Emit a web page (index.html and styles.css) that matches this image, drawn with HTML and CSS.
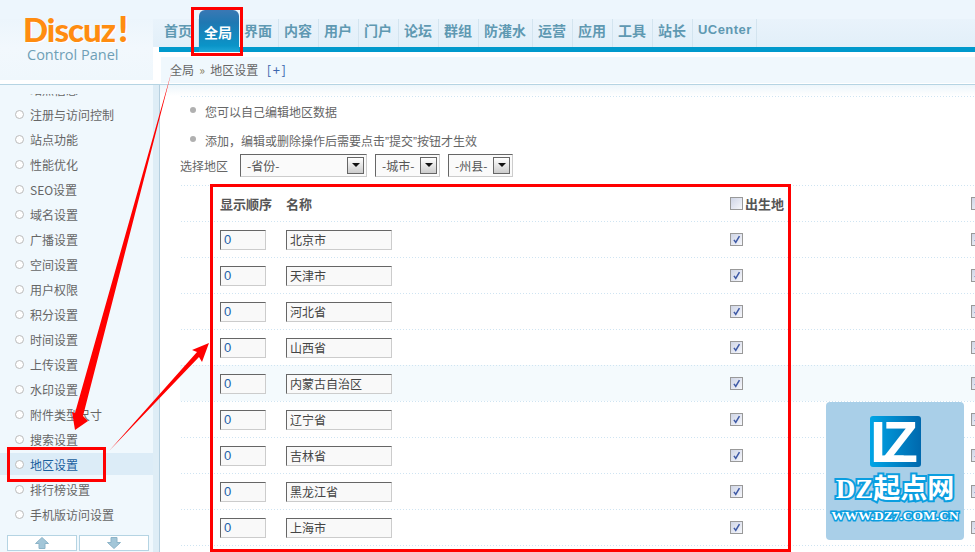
FILE: index.html
```html
<!DOCTYPE html>
<html lang="zh-CN">
<head>
<meta charset="utf-8">
<title>地区设置</title>
<link rel="stylesheet" href="styles.css">
</head>
<body>
<svg class="defs" width="0" height="0" aria-hidden="true">
  <symbol id="tick" viewBox="0 0 13 13"><path d="M3.5 7 L5.6 10 L10 2.5" fill="none" stroke="#3f5aa6" stroke-width="1.8"/></symbol>
</svg>
<div class="page">
  <header class="header">
    <div class="logo">
      <div class="logo-main">Discuz<span class="bang">!</span></div>
      <div class="logo-sub">Control Panel</div>
    </div>
    <div class="head-right">
      <nav class="nav">
        <a class="nav-item">首页</a>
        <a class="nav-item active">全局</a>
        <a class="nav-item">界面</a>
        <a class="nav-item">内容</a>
        <a class="nav-item">用户</a>
        <a class="nav-item">门户</a>
        <a class="nav-item">论坛</a>
        <a class="nav-item">群组</a>
        <a class="nav-item">防灌水</a>
        <a class="nav-item">运营</a>
        <a class="nav-item">应用</a>
        <a class="nav-item">工具</a>
        <a class="nav-item">站长</a>
        <a class="nav-item uc">UCenter</a>
      </nav>
      <div class="crumb-bar">全局 <span class="sep">»</span> 地区设置 <span class="plus">[+]</span></div>
    </div>
  </header>
  <div class="body">
    <aside class="side">
      <div class="side-col">
        <div class="menu">
          <ul class="menu-list">
            <li class="menu-item">站点信息</li>
            <li class="menu-item">注册与访问控制</li>
            <li class="menu-item">站点功能</li>
            <li class="menu-item">性能优化</li>
            <li class="menu-item">SEO设置</li>
            <li class="menu-item">域名设置</li>
            <li class="menu-item">广播设置</li>
            <li class="menu-item">空间设置</li>
            <li class="menu-item">用户权限</li>
            <li class="menu-item">积分设置</li>
            <li class="menu-item">时间设置</li>
            <li class="menu-item">上传设置</li>
            <li class="menu-item">水印设置</li>
            <li class="menu-item">附件类型尺寸</li>
            <li class="menu-item">搜索设置</li>
            <li class="menu-item current">地区设置</li>
            <li class="menu-item">排行榜设置</li>
            <li class="menu-item">手机版访问设置</li>
          </ul>
        </div>
        <div class="scroll-btns">
          <button class="scroll-btn"><svg width="14" height="12" viewBox="0 0 14 12"><path d="M7 0.5 L13.5 6.5 H10 V11.5 H4 V6.5 H0.5 Z" fill="#a3c6d8" stroke="#8db4c8"/></svg></button>
          <button class="scroll-btn"><svg width="14" height="12" viewBox="0 0 14 12"><path d="M7 11.5 L13.5 5.5 H10 V0.5 H4 V5.5 H0.5 Z" fill="#a3c6d8" stroke="#8db4c8"/></svg></button>
        </div>
      </div>
      <div class="side-strip"></div>
    </aside>
    <main class="main">
      <ul class="tips">
        <li class="tip">您可以自己编辑地区数据</li>
        <li class="tip">添加，编辑或删除操作后需要点击<span class="q">”</span>提交<span class="q">”</span>按钮才生效</li>
      </ul>
      <div class="filter">
        <span class="filter-label">选择地区</span>
        <div class="sel sel-wide"><span class="sel-text">-省份-</span><span class="sel-btn"><i class="caret"></i></span></div>
        <div class="sel"><span class="sel-text">-城市-</span><span class="sel-btn"><i class="caret"></i></span></div>
        <div class="sel"><span class="sel-text">-州县-</span><span class="sel-btn"><i class="caret"></i></span></div>
      </div>
      <div class="grid-row head">
        <span>显示顺序</span><span>名称</span>
        <span class="birth"><span class="cb"></span>出生地</span>
        <span class="cb"></span>
      </div>
      <div class="grid-row"><span class="inp order">0</span><span class="inp name">北京市</span><span class="cb"><svg><use href="#tick"/></svg></span><span class="cb"><svg><use href="#tick"/></svg></span></div>
      <div class="grid-row"><span class="inp order">0</span><span class="inp name">天津市</span><span class="cb"><svg><use href="#tick"/></svg></span><span class="cb"><svg><use href="#tick"/></svg></span></div>
      <div class="grid-row"><span class="inp order">0</span><span class="inp name">河北省</span><span class="cb"><svg><use href="#tick"/></svg></span><span class="cb"><svg><use href="#tick"/></svg></span></div>
      <div class="grid-row"><span class="inp order">0</span><span class="inp name">山西省</span><span class="cb"><svg><use href="#tick"/></svg></span><span class="cb"><svg><use href="#tick"/></svg></span></div>
      <div class="grid-row hover"><span class="inp order">0</span><span class="inp name">内蒙古自治区</span><span class="cb"><svg><use href="#tick"/></svg></span><span class="cb"><svg><use href="#tick"/></svg></span></div>
      <div class="grid-row"><span class="inp order">0</span><span class="inp name">辽宁省</span><span class="cb"><svg><use href="#tick"/></svg></span><span class="cb"><svg><use href="#tick"/></svg></span></div>
      <div class="grid-row"><span class="inp order">0</span><span class="inp name">吉林省</span><span class="cb"><svg><use href="#tick"/></svg></span><span class="cb"><svg><use href="#tick"/></svg></span></div>
      <div class="grid-row"><span class="inp order">0</span><span class="inp name">黑龙江省</span><span class="cb"><svg><use href="#tick"/></svg></span><span class="cb"><svg><use href="#tick"/></svg></span></div>
      <div class="grid-row"><span class="inp order">0</span><span class="inp name">上海市</span><span class="cb"><svg><use href="#tick"/></svg></span><span class="cb"><svg><use href="#tick"/></svg></span></div>
      <div class="grid-row"></div>
    </main>
  </div>

  <div class="mark mark-tab"></div>
  <div class="mark mark-menu"></div>
  <div class="mark mark-table"></div>
  <svg class="arrows" width="975" height="552" viewBox="0 0 975 552" aria-hidden="true">
    <polygon fill="#ff0000" points="172,70 83,416 88,421 75,430 72,412 75,413"/>
    <polygon fill="#ff0000" points="109,451 197,352 192,350 209,343 202,362 199,357"/>
  </svg>
  <div class="badge">
    <div class="badge-logo"><span class="badge-l">L</span><span class="badge-z">Z</span></div>
    <div class="badge-name">DZ起点网</div>
    <div class="badge-url">WWW.DZ7.COM.CN</div>
  </div>
</div>
</body>
</html>
```
FILE: styles.css
```css
* { box-sizing: border-box; }
html, body { margin: 0; padding: 0; }
body {
  font-family: "Noto Sans CJK SC", "Liberation Sans", sans-serif;
  font-size: 12px;
  color: #666;
  background: #fff;
  overflow: hidden;
}
.defs { position: absolute; }
.page {
  position: relative;
  width: 975px;
  height: 552px;
  overflow: hidden;
  display: flex;
  flex-direction: column;
}

/* header */
.header {
  height: 85px;
  display: flex;
  flex: none;
  background: linear-gradient(#edf6fd 0, #edf6fd 19px, #e9f3fb 19px, #e2eff9 47px, #fff 47px);
  border-bottom: 1px solid #b5d4e3;
}
.logo {
  width: 153px;
  height: 80px;
  flex: none;
  padding: 10px 0 0 23px;
  background: linear-gradient(#edf6fd 0, #edf6fd 19px, #ecf5fc 19px, #f2f8fd 60%, #eff7fc);
}
.logo-main {
  font-family: Lato, "Liberation Sans", sans-serif;
  font-weight: 900;
  font-size: 33px;
  line-height: 36px;
  letter-spacing: -1px;
  color: #ff8c10;
  text-shadow: 1px 1px 0 #fff;
}
.bang { margin-left: 3px; font-size: 36px; }
.logo-sub {
  font-family: "Open Sans", "Liberation Sans", sans-serif;
  font-size: 14.5px;
  line-height: 18px;
  margin: -1px 0 0 4px;
  color: #6f9fb6;
}
.head-right { flex: 1; display: flex; flex-direction: column; min-width: 0; margin-left: 6px; }
.nav {
  height: 52px;
  display: flex;
  align-items: flex-end;
  border-bottom: 5px solid #0099cc;
}
.nav-item {
  height: 28px;
  padding: 0 6px 0 5px;
  border-right: 1px solid #d3e4ef;
  font-size: 14px;
  font-weight: 700;
  line-height: 22px;
  color: #5f99b2;
  white-space: nowrap;
  flex: none;
}
.nav-item.active {
  height: 42px;
  width: 40px;
  margin-bottom: -5px;
  padding: 11px 0 0 5px;
  border-right: 0;
  border-radius: 6px 6px 0 0;
  background: linear-gradient(#3a78b4, #1f78b2 30%, #0a94c8 85%, #20a8d8);
  color: #fff;
}
.nav-item.uc {
  font-family: "Liberation Sans", sans-serif;
  font-size: 13px;
  padding: 0 4px 0 5px;
  letter-spacing: 0.45px;
}
.crumb-bar {
  margin: 5px 0 0 2px;
  height: 26px;
  line-height: 26px;
  padding-left: 9px;
  background: #f0f8fd;
  color: #666;
}
.sep { color: #8a7f5f; margin: 0 2.5px; }
.plus { color: #3b66ad; margin-left: 6px; font-size: 13px; letter-spacing: 1.5px; }

/* body */
.body { flex: 1; display: flex; min-height: 0; }
.side { flex: none; width: 160px; display: flex; }
.side-col {
  width: 153px;
  background: #f0f8fd;
  display: flex;
  flex-direction: column;
  padding-top: 9px;
}
.side-strip {
  flex: 1;
  background: #deedf6;
  border-right: 1px solid #b5cfdf;
}
.menu { flex: 1; overflow: hidden; min-height: 0; }
.menu-list { list-style: none; margin: -16px 0 0; padding: 0; }
.menu-item {
  position: relative;
  height: 22px;
  margin-bottom: 3px;
  line-height: 24px;
  padding-left: 30px;
  white-space: nowrap;
  color: #666;
}
.menu-item::before {
  content: "";
  position: absolute;
  left: 15px;
  top: 7px;
  width: 7px;
  height: 7px;
  border-radius: 50%;
  border: 1px solid #bbb;
  background: #fff;
}
.menu-item.current { background: #dcecf7; color: #1a5f9e; }
.scroll-btns { flex: none; display: flex; gap: 2px; padding: 4px 0 1px 7px; }
.scroll-btn {
  width: 70px;
  height: 16px;
  padding: 0;
  border: 1px solid #b5d4e3;
  background: #fff;
  display: flex;
  align-items: center;
  justify-content: center;
}

/* main */
.main { flex: 1; min-width: 0; padding-left: 20px; background: linear-gradient(#edf6fb, #fff 11px); }
.tips {
  list-style: none;
  margin: 0;
  padding: 15px 0 0 25px;
  height: 65px;
  background-image: radial-gradient(circle, #cfe4f2 0.7px, transparent 0.8px);
  background-size: 3px 1px;
  background-repeat: repeat-x;
  background-position: 0 11px;
}
.tip { position: relative; height: 29px; line-height: 24px; }
.tip::before {
  content: "";
  position: absolute;
  left: -15px;
  top: 7px;
  width: 6px;
  height: 6px;
  border-radius: 50%;
  background: #b0b0b0;
}
.q { font-family: "Liberation Sans", sans-serif; }
.filter { height: 35px; display: flex; align-items: center; padding-bottom: 5px; }
.filter-label { width: 60px; }
.sel {
  height: 23px;
  width: 65px;
  margin-right: 8px;
  display: flex;
  align-items: center;
  justify-content: space-between;
  padding: 0 2px 0 6px;
  background: #fafafa;
  border: 1px solid;
  border-color: #666 #ccc #ccc #666;
  color: #555;
}
.sel-wide { width: 127px; }
.sel-btn {
  width: 17px;
  height: 17px;
  border: 1px solid #666;
  background: linear-gradient(#fff, #ccc);
  display: flex;
  align-items: center;
  justify-content: center;
  flex: none;
}
.caret {
  width: 0;
  height: 0;
  border: 4px solid transparent;
  border-top: 4px solid #111;
  border-bottom: 0;
}
.grid-row {
  height: 36px;
  display: grid;
  grid-template-columns: 66px 444px 241px 1fr;
  align-items: center;
  padding-left: 40px;
  background-image: radial-gradient(circle, #cfe4f2 0.7px, transparent 0.8px);
  background-size: 3px 1px;
  background-repeat: repeat-x;
  background-position: 0 0;
}
.grid-row.hover { background-color: #f4fafd; }
.head { font-weight: 700; font-size: 13px; color: #555; }
.birth { display: flex; align-items: center; gap: 2px; }
.inp {
  height: 20px;
  margin-top: 2px;
  line-height: 18px;
  padding-left: 3px;
  background: #f9f9f9;
  border: 1px solid;
  border-color: #666 #ccc #ccc #666;
  color: #444;
}
.order { width: 46px; color: #1c5fa8; font-family: "Liberation Sans", sans-serif; font-size: 13px; }
.name { width: 106px; }
.cb {
  display: block;
  width: 13px;
  height: 13px;
  border: 1px solid #999;
  background: linear-gradient(135deg, #cfd5e6, #f6f7fb);
  flex: none;
}
.cb svg { display: block; width: 11px; height: 11px; }

/* annotations */
.mark { position: absolute; border: 3px solid #ff0000; pointer-events: none; }
.mark-tab { left: 191px; top: 7px; width: 52px; height: 49px; }
.mark-menu { left: 7px; top: 447px; width: 99px; height: 35px; }
.mark-table { left: 210px; top: 184px; width: 581px; height: 368px; }
.arrows { position: absolute; left: 0; top: 0; pointer-events: none; }

/* watermark */
.badge {
  position: absolute;
  left: 826px;
  top: 402px;
  width: 138px;
  height: 138px;
  border-radius: 4px;
  background: #a9cfe8;
  display: flex;
  flex-direction: column;
  align-items: center;
  padding-top: 14px;
}
.badge-logo {
  width: 51px;
  height: 51px;
  padding-right: 2px;
  border-radius: 3px;
  background: linear-gradient(90deg, #00a5e6, #0068ad);
  color: #fff;
  font-family: "Liberation Sans", sans-serif;
  font-weight: 700;
  font-size: 58px;
  line-height: 51px;
  display: flex;
  justify-content: center;
}
.badge-l { margin-right: -23px; }
.badge-name {
  margin-top: 9px;
  font-family: "Liberation Serif", "Noto Sans CJK SC", serif;
  font-weight: 700;
  font-size: 27px;
  line-height: 26px;
  color: #fff;
  -webkit-text-stroke: 4px #0a9ee0;
  paint-order: stroke fill;
  white-space: nowrap;
}
.badge-url {
  margin-top: 6px;
  font-family: "Liberation Serif", serif;
  font-weight: 700;
  font-size: 13.5px;
  line-height: 16px;
  color: #fff;
  -webkit-text-stroke: 3px #0a9ee0;
  paint-order: stroke fill;
  white-space: nowrap;
}
```
